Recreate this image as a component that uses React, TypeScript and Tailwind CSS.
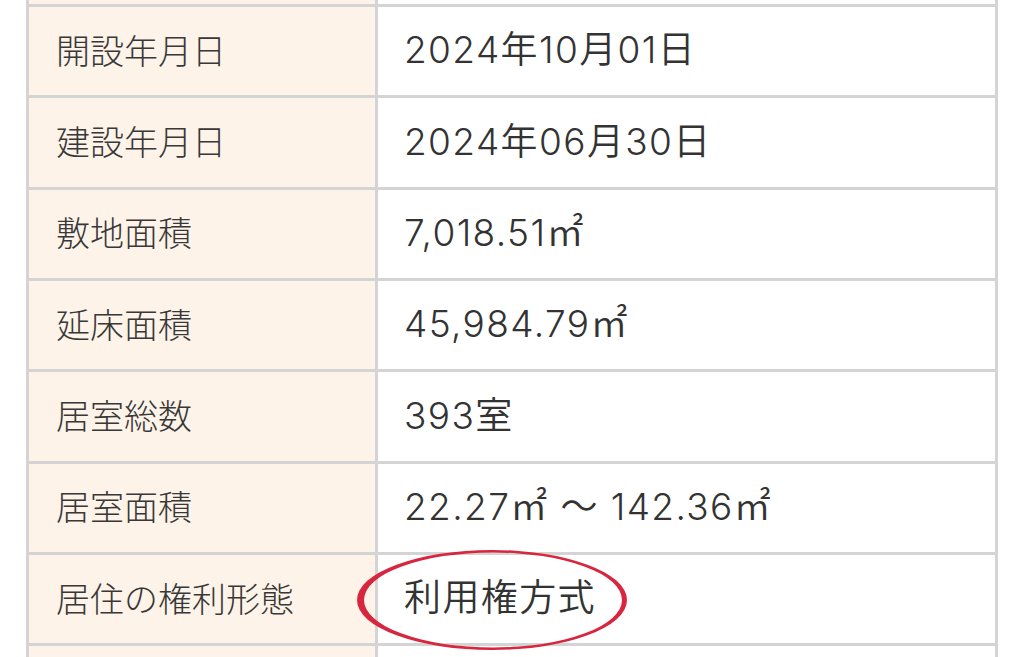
const rows: [string, string][] = [
  ["", ""],
  ["開設年月日", "2024年10月01日"],
  ["建設年月日", "2024年06月30日"],
  ["敷地面積", "7,018.51㎡"],
  ["延床面積", "45,984.79㎡"],
  ["居室総数", "393室"],
  ["居室面積", "22.27㎡ 〜 142.36㎡"],
  ["居住の権利形態", "利用権方式"],
  ["", ""],
];

export default function App() {
  return (
    <div className="relative h-[657px] w-[1024px] overflow-hidden bg-white">
      <div
        className="ml-[26px] grid w-[972px] grid-cols-[346px_617px] gap-[3px] bg-[#d4d4d4] px-[3px]"
        style={{ gridTemplateRows: "4px repeat(7, 88.33px) 40px" }}
      >
        {rows.map(([label, value], i) => (
          <div key={i} className="contents">
            <div className="flex items-center bg-[#fdf3e8] pb-[4px] pl-[27px] text-[34px] font-light text-[#383838] [font-family:'Noto_Sans_CJK_JP',sans-serif]">
              {label}
            </div>
            <div className="flex items-center bg-white pb-[2px] pl-[26px] text-[37px] font-[350] tracking-[1.4px] text-[#333] [font-family:'Inter','Noto_Sans_CJK_JP',sans-serif]">
              {value}
            </div>
          </div>
        ))}
      </div>
      <svg
        className="pointer-events-none absolute left-0 top-0"
        width="1024"
        height="657"
        viewBox="0 0 1024 657"
      >
        <path
          fillRule="evenodd"
          fill="#d7263d"
          d="M357 600 A135 50 0 1 0 627 600 A135 50 0 1 0 357 600 Z M364 600 A129 47.5 0 1 0 622 600 A129 47.5 0 1 0 364 600 Z"
        />
      </svg>
    </div>
  );
}
